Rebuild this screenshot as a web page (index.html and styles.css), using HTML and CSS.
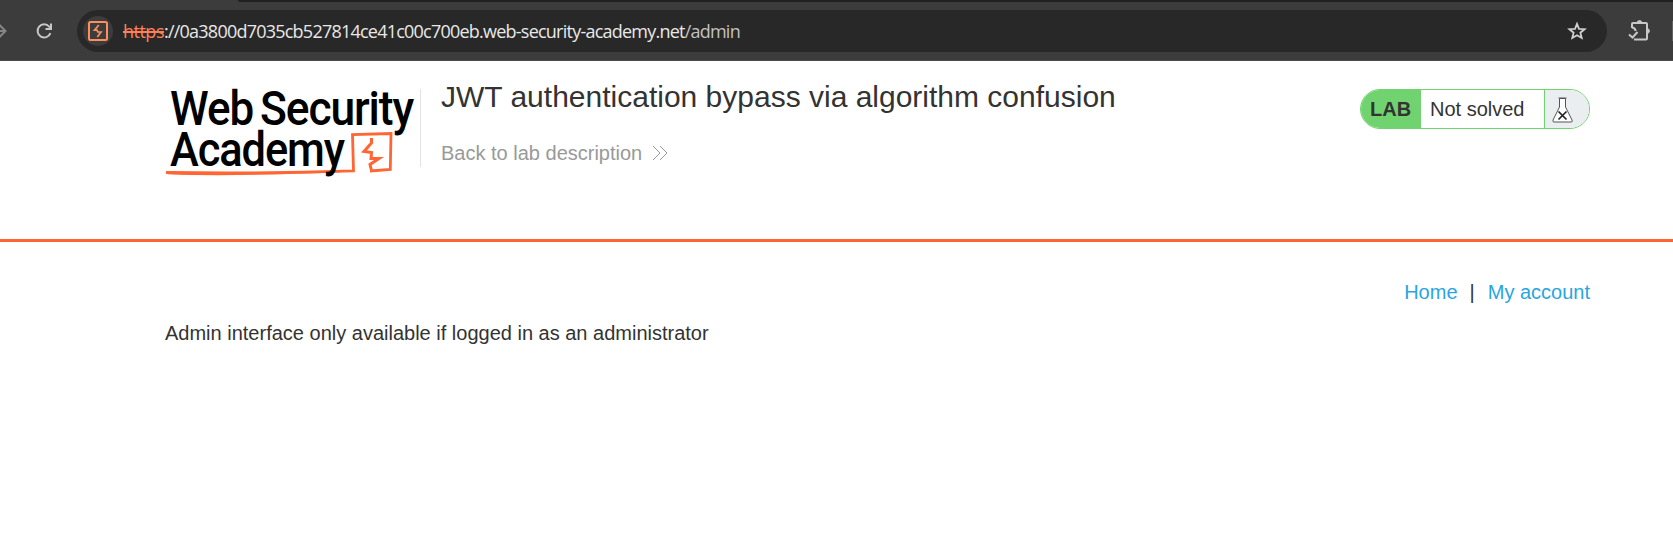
FILE: index.html
```html
<!DOCTYPE html>
<html lang="en">
<head>
<meta charset="utf-8">
<title>JWT authentication bypass via algorithm confusion</title>
<link rel="stylesheet" href="styles.css">
</head>
<body>
<div class="browser">
  <div class="tabstrip"></div>
  <div class="toolbar">
    <svg class="forward" width="8" height="20" viewBox="0 0 8 20" fill="none" stroke="#858585" stroke-width="2"><path d="M0 10H5M-1 3.5 5.5 10-1 16.5"/></svg>
    <svg class="reload" width="20" height="20" viewBox="0 0 20 20" fill="none" stroke="#c7c7c7" stroke-width="2"><path d="M16.4 12.2A6.6 6.6 0 1 1 15.2 5.6L17 7.5M17 2.5V8H11.5"/></svg>
    <div class="omnibox">
      <span class="site"><svg width="20" height="20" viewBox="0 0 20 20" fill="none" stroke="#ff8e5e"><rect x="1" y="1" width="18" height="18" rx="1.5" stroke-width="2"/><path d="M10.8 4 6.5 9.2 9 9.2 9.8 11 13 11 9.3 16" stroke-width="1.7"/></svg></span>
      <span class="url"><span class="scheme">https</span>://0a3800d7035cb527814ce41c00c700eb.web-security-academy.net<span class="path">/admin</span></span>
      <svg class="star" width="20" height="20" viewBox="0 0 20 20" fill="none" stroke="#d0d0d0" stroke-width="1.8"><path d="M10 2.8 12 7.8 17.6 8.2 13.4 11.7 14.7 17 10 14.2 5.3 17 6.6 11.7 2.4 8.2 8 7.8Z"/></svg>
    </div>
    <svg class="extensions" width="24" height="24" viewBox="0 0 24 24" fill="none" stroke="#c7c7c7" stroke-width="2"><path d="M4 9V5Q4 4 5 4H18Q19 4 19 5V19.5Q19 20.500 18 20.500H6M4 8.500Q7.500 9 7.500 12M1 15.500 4.500 18.500 9.500 13"/><path d="M9 3.500A2.600 2.600 0 0 1 14 3.500ZM19.500 9.500A2.600 2.600 0 0 1 19.500 14.500Z" fill="#c7c7c7" stroke-width="1"/></svg>
    <span class="divider"></span>
  </div>
</div>
<header class="lab-header">
  <div class="container head-row">
    <svg class="logo" width="256" height="100" viewBox="165 80 256 100">
      <g class="logo-text">
        <text x="170" y="125" textLength="83" lengthAdjust="spacingAndGlyphs">Web</text>
        <text x="260" y="125" textLength="153" lengthAdjust="spacingAndGlyphs">Security</text>
      </g>
      <path d="M166 172.500Q260 174 353.500 170.800L352.500 134.500 391 133.500 390.300 169.500 370 171" fill="none" stroke="#ff6633" stroke-width="2.800"/>
      <path d="M168 173.500Q230 176 340 171.500" fill="none" stroke="#ff6633" stroke-width="1.500"/>
      <path d="M371.500 138 371.500 143 364 151.500 371.500 152.500 371 158.500 379 158.500 370 164.500 371.500 170.500" fill="none" stroke="#ff6633" stroke-width="3"/>
      <text class="logo-text" x="170" y="166" textLength="174" lengthAdjust="spacingAndGlyphs">Academy</text>
    </svg>
    <div class="title-box">
      <h2>JWT authentication bypass via algorithm confusion</h2>
      <a class="back">Back to lab description<svg width="16" height="16" viewBox="0 0 16 16" fill="none" stroke="#999" stroke-width="1"><path d="M1 1 8 8 1 15M8 1 15 8 8 15"/></svg></a>
    </div>
    <div class="status">
      <span class="lab">LAB</span>
      <span class="state">Not solved</span>
      <span class="flask"><svg width="22" height="26" viewBox="0 0 22 26"><path d="M7.500 1.500V10L1 23Q.5 25 2 25H19Q21 25 20 23L13.500 10V1.500Z" fill="#fff" stroke="#555"/><path d="M6.500 1H14.500" stroke="#555"/><path d="M6.500 14.500 14.500 22.500M14.500 14.500 6.500 22.500" stroke="#222" stroke-width="1.700"/></svg></span>
    </div>
  </div>
</header>
<main class="container">
  <nav><a>Home</a><span>|</span><a>My account</a></nav>
  <p><span class="message">Admin interface only available if logged in as an administrator</span></p>
</main>
</body>
</html>
```
FILE: styles.css
```css
* { box-sizing: border-box; }
body { margin: 0; background: #fff; color: #333332; font: 20px/24px "Liberation Sans", Arial, sans-serif; overflow: hidden; }
svg { display: block; flex: none; }
.browser { height: 61px; background: #3c3c3c; border-bottom: 1px solid #4b4b4b; }
.tabstrip { height: 2px; margin-left: 238px; background: #202020; border-bottom-left-radius: 4px; }
.toolbar { display: flex; align-items: center; height: 58px; }
.reload { margin-left: 26px; }
.omnibox { display: flex; align-items: center; width: 1530px; height: 42px; margin-left: 23px; padding: 0 20px 0 6px; border-radius: 21px; background: #282828; }
.site { display: flex; align-items: center; justify-content: center; width: 30px; height: 30px; border-radius: 50%; background: #3c3c3c; }
.url { margin-left: 10px; font: 18px/24px "Open Sans", "Noto Sans", sans-serif; letter-spacing: -0.77px; color: #e8e8e8; white-space: nowrap; }
.scheme { letter-spacing: -0.5px; color: #ff8058; text-decoration: line-through; text-decoration-thickness: 2px; }
.path { color: #c2c2c2; }
.star { margin-left: auto; }
.extensions { margin-left: 21px; }
.divider { width: 1px; height: 20px; margin-left: auto; background: #626262; }
.container { width: 1425px; margin-left: 165px; }
.lab-header { height: 181px; border-bottom: 3px solid #ff6633; }
.head-row { display: flex; align-items: flex-start; padding-top: 19px; }
.logo { overflow: visible; }
.logo-text { font: 500 48px Roboto, sans-serif; letter-spacing: -1.2px; fill: #000; }
.title-box { height: 78px; margin: 9px 0 0 -1px; padding-left: 20px; border-left: 1px solid #e3e3e3; }
h2 { margin: -9px 0 0; font-size: 30px; line-height: 34px; font-weight: 400; white-space: nowrap; }
.back { display: flex; align-items: center; gap: 10px; margin-top: 27px; color: #999; }
.status { display: flex; width: 230px; height: 40px; margin: 9px 0 0 auto; border: 1px solid #70d36f; border-radius: 20px; overflow: hidden; line-height: 38px; }
.lab { width: 60px; padding-left: 9px; background: #70d36f; font-weight: 700; }
.state { width: 123px; padding-left: 9px; }
.flask { flex: 1; padding: 7px 0 0 7px; border-left: 1px solid #70d36f; background: #eaeef1; }
nav { display: flex; justify-content: flex-end; padding-top: 38px; color: #29a6df; }
nav span { margin: 0 13px 0 12px; color: #333332; }
p { margin: 17px 0 0; }
```
